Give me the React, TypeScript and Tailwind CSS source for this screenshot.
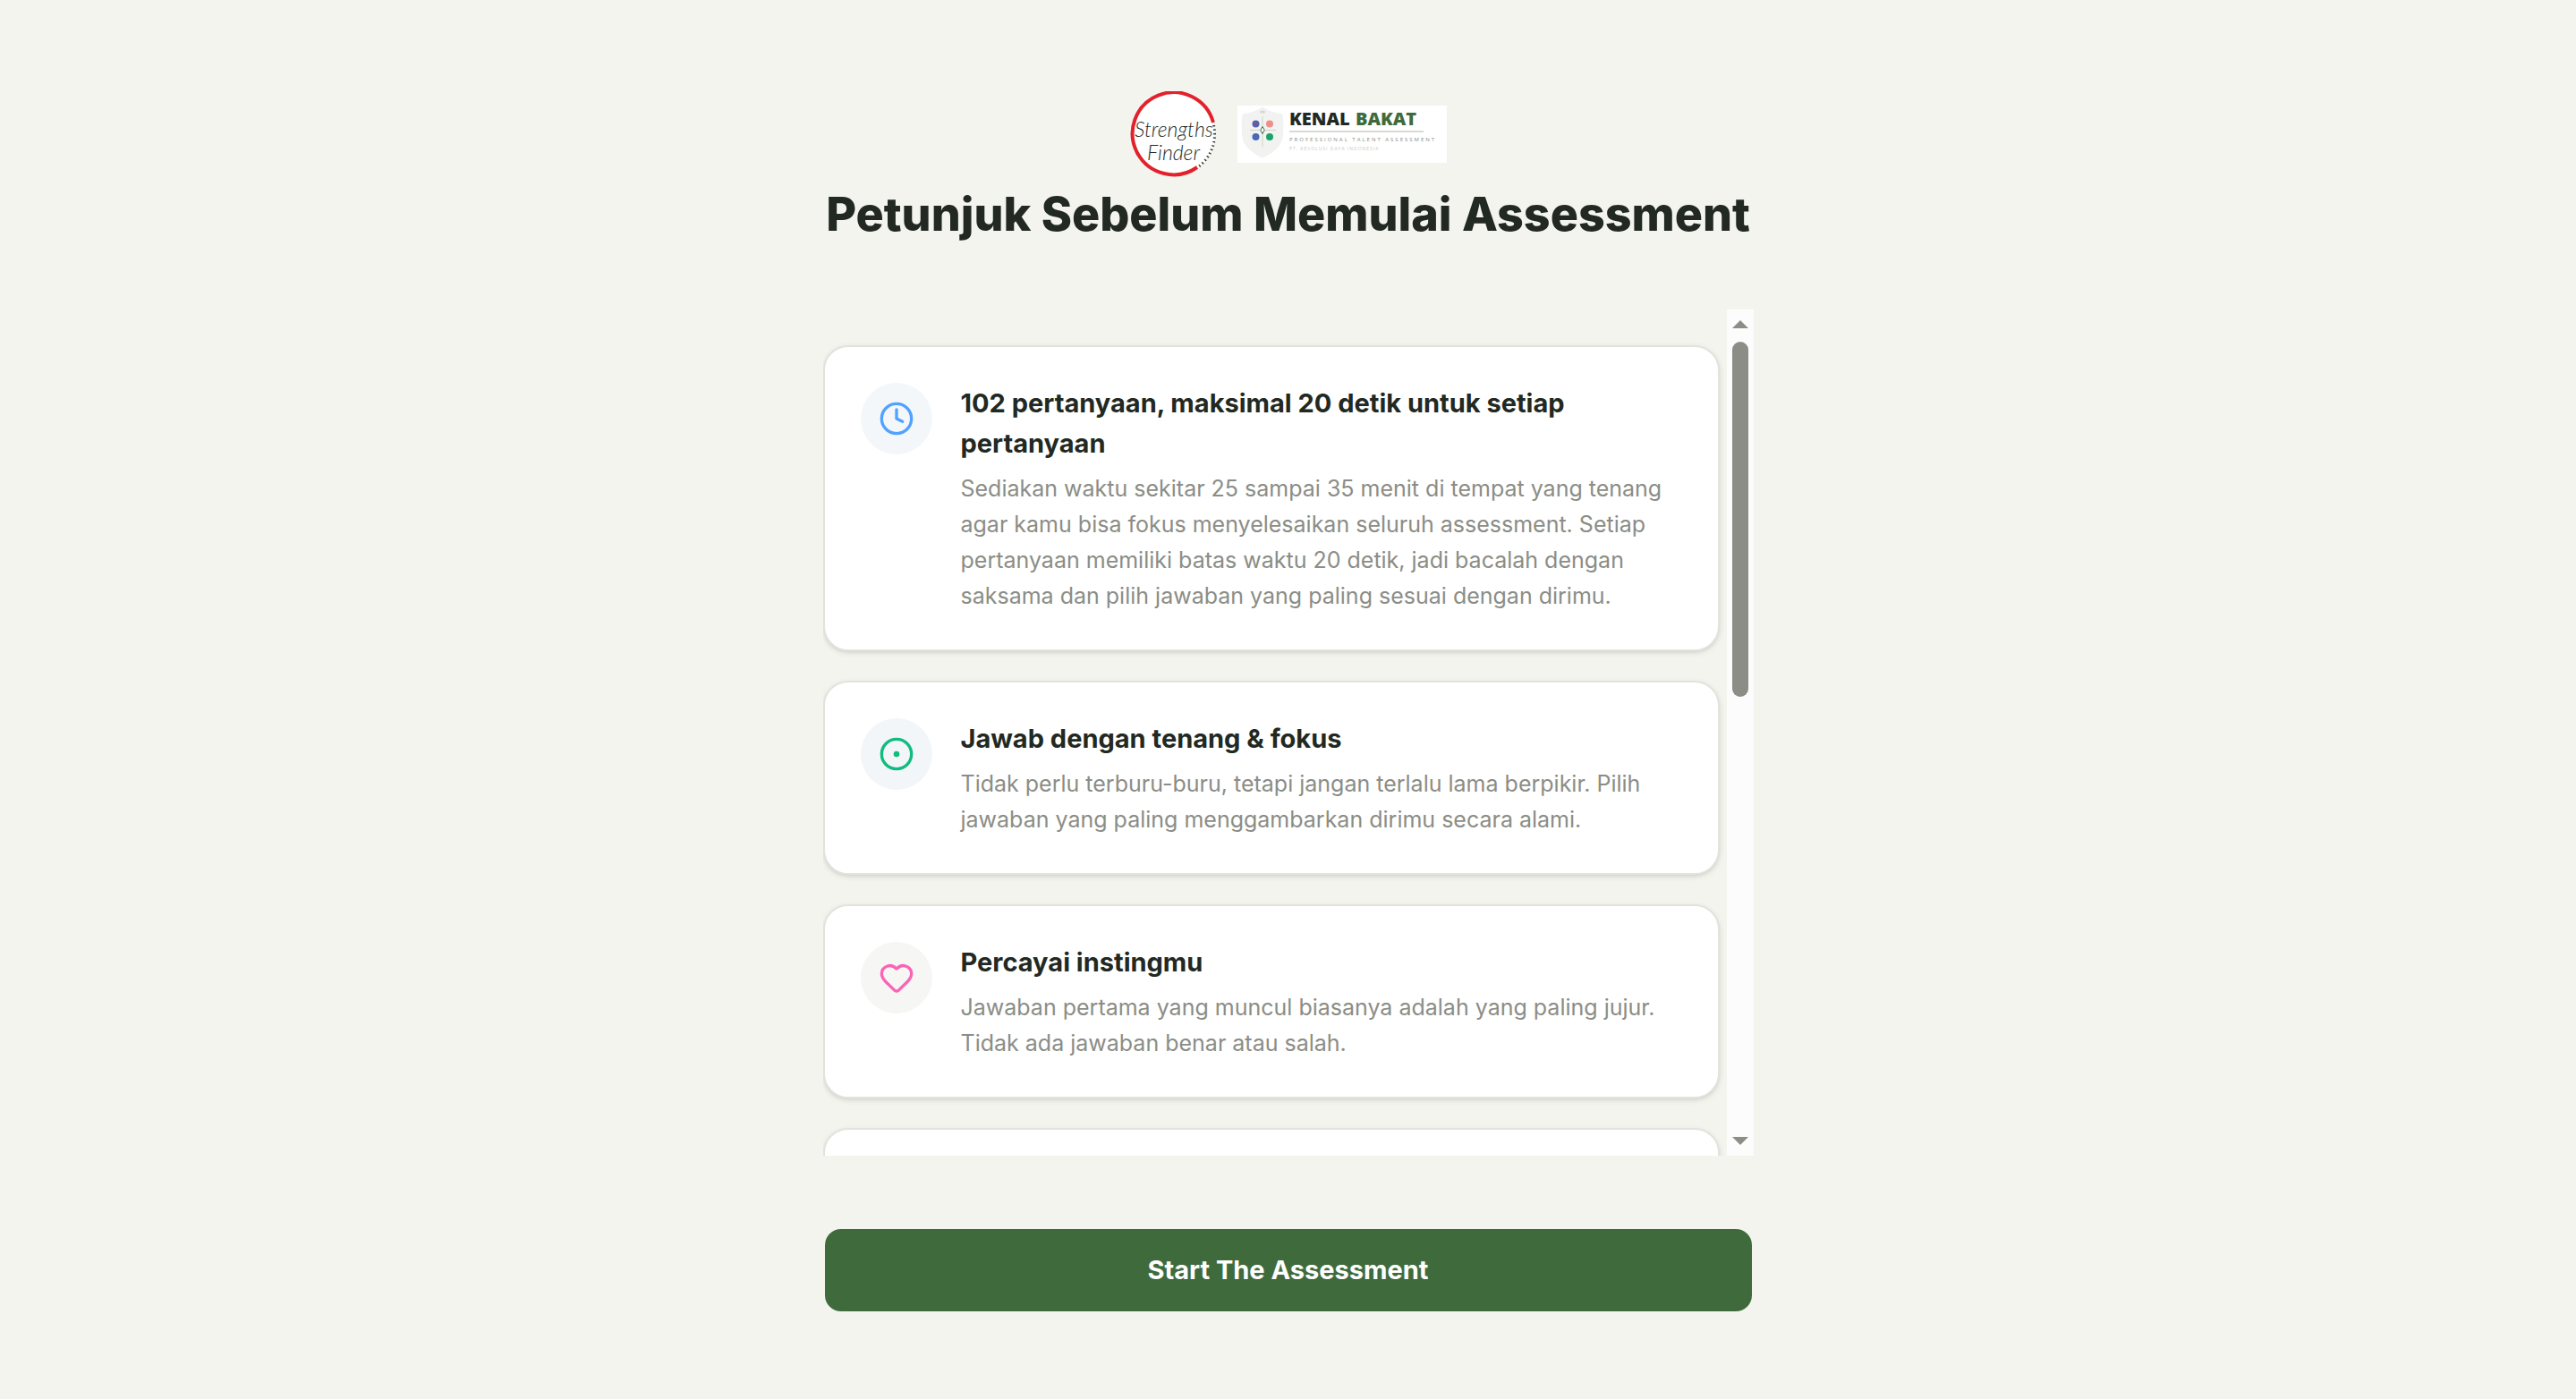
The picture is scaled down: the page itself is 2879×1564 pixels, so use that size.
import { CircleDot, Clock, Heart, type LucideIcon } from 'lucide-react';

type Instruction = {
  icon: LucideIcon;
  iconColor: string;
  iconBg: string;
  title: string;
  description: string;
};

const instructions: Instruction[] = [
  {
    icon: Clock,
    iconColor: 'text-[#51a2ff]',
    iconBg: 'bg-[#f3f7fa]',
    title: '102 pertanyaan, maksimal 20 detik untuk setiap pertanyaan',
    description:
      'Sediakan waktu sekitar 25 sampai 35 menit di tempat yang tenang agar kamu bisa fokus menyelesaikan seluruh assessment. Setiap pertanyaan memiliki batas waktu 20 detik, jadi bacalah dengan saksama dan pilih jawaban yang paling sesuai dengan dirimu.',
  },
  {
    icon: CircleDot,
    iconColor: 'text-[#10bc7e]',
    iconBg: 'bg-[#f2f6f9]',
    title: 'Jawab dengan tenang & fokus',
    description:
      'Tidak perlu terburu-buru, tetapi jangan terlalu lama berpikir. Pilih jawaban yang paling menggambarkan dirimu secara alami.',
  },
  {
    icon: Heart,
    iconColor: 'text-[#fb64b6]',
    iconBg: 'bg-[#f6f6f4]',
    title: 'Percayai instingmu',
    description:
      'Jawaban pertama yang muncul biasanya adalah yang paling jujur. Tidak ada jawaban benar atau salah.',
  },
];

const cardClass =
  'shrink-0 rounded-[28px] border-2 border-[#e3e3de] bg-white p-10 shadow-[0_2px_6px_rgba(0,0,0,0.1),0_2px_4px_-2px_rgba(0,0,0,0.1)]';

function StrengthsFinderLogo() {
  return (
    <svg viewBox="0 0 96 96" className="size-24" role="img" aria-label="Strengths Finder">
      <circle cx="48" cy="48" r="47" fill="#fff" />
      <path d="M93 35A46 46 0 1 0 75 85" fill="none" stroke="#e3212d" strokeWidth="4" />
      <path
        d="M93.5 38A46 46 0 0 1 77 84"
        fill="none"
        stroke="#3b413b"
        strokeWidth="3"
        strokeDasharray="1.5 3"
      />
      <g
        fill="#252b25"
        fontFamily="Lato, 'Liberation Sans', sans-serif"
        fontStyle="italic"
        fontWeight="300"
      >
        <text x="5" y="51" fontSize="23">
          Strengths
        </text>
        <text x="19" y="77" fontSize="23">
          Finder
        </text>
      </g>
    </svg>
  );
}

function KenalBakatLogo() {
  return (
    <svg viewBox="0 0 234 64" className="h-16 w-[234px] bg-white" role="img" aria-label="Kenal Bakat">
      <path
        d="M28 2C35 7 43 9 50 10C51 20 51 28 50 36C48 46 39 53 28 58C17 53 8 46 6 36C5 28 5 20 6 10C13 9 21 7 28 2Z"
        fill="#f2f3f1"
        stroke="#eef1f5"
      />
      <ellipse cx="28" cy="7" rx="3" ry="1.5" fill="#d5d7d2" />
      <path d="M28 12V46M14 27.5H43" stroke="#d0d3ce" strokeWidth="1" />
      <circle cx="20.5" cy="20.5" r="4" fill="#4a66b5" />
      <circle cx="20.5" cy="20.5" r="1.8" fill="#9b4a7c" />
      <circle cx="36" cy="20.5" r="4" fill="#f08f88" />
      <circle cx="20.5" cy="35" r="4" fill="#4a68b4" />
      <circle cx="36" cy="35" r="4" fill="#1ba36c" />
      <path d="M28 23.5L30.2 27.5L28 31.5L25.8 27.5Z" fill="#fff" stroke="#3f6b4a" />
      <g fontFamily="'Open Sans', 'Liberation Sans', sans-serif">
        <g fontSize="20" fontWeight="800">
          <text x="58" y="22" fill="#222922">
            KENAL
          </text>
          <text x="132" y="22" fill="#3f6b3c">
            BAKAT
          </text>
        </g>
        <text x="58" y="40" fontSize="6" fill="#8b8f88" className="tracking-[2px]">
          PROFESSIONAL TALENT ASSESSMENT
        </text>
        <text x="58" y="50" fontSize="5" fill="#c9cbc6" className="tracking-[1px]">
          PT. REVOLUSI DAYA INDONESIA
        </text>
      </g>
      <path d="M58 29H208" stroke="#d9dad5" strokeWidth="2" />
    </svg>
  );
}

function InstructionCard({ icon: Icon, iconColor, iconBg, title, description }: Instruction) {
  return (
    <li className={`flex gap-8 ${cardClass}`}>
      <div className={`flex size-20 shrink-0 items-center justify-center rounded-full ${iconBg}`}>
        <Icon className={`size-10 ${iconColor}`} />
      </div>
      <div className="min-w-0">
        <h2 className="mb-2 text-[29px] leading-[45px] font-bold text-[#222922]">{title}</h2>
        <p className="text-[25px] leading-10 text-[#8b8d86]">{description}</p>
      </div>
    </li>
  );
}

function Scrollbar() {
  return (
    <div
      className="flex w-[30px] shrink-0 flex-col items-center justify-between bg-[#fcfcfc] py-3 text-[#8b8d86]"
      aria-hidden="true"
    >
      <div className="flex flex-col gap-[15px]">
        <svg viewBox="0 0 18 9" className="h-[9px] w-[18px]">
          <path d="M0 9L9 0L18 9Z" fill="currentColor" />
        </svg>
        <div className="h-[397px] w-[18px] rounded-full bg-[#8b8d86]" />
      </div>
      <svg viewBox="0 0 18 9" className="h-[9px] w-[18px]">
        <path d="M0 0L9 9L18 0Z" fill="currentColor" />
      </svg>
    </div>
  );
}

export default function App() {
  return (
    <main className="flex h-screen flex-col items-center bg-[#f3f4ee] pt-[102px] pb-[98px] font-[Inter,'Liberation_Sans',sans-serif]">
      <div className="flex min-h-0 w-full max-w-[1040px] flex-1 flex-col">
        <header className="mb-16 flex flex-col items-center">
          <div className="flex items-center gap-6">
            <StrengthsFinderLogo />
            <KenalBakatLogo />
          </div>
          <h1 className="text-center text-[52px] leading-[84px] font-extrabold text-[#222922] sm:whitespace-nowrap">
            Petunjuk Sebelum Memulai Assessment
          </h1>
        </header>

        <div className="flex min-h-0 flex-1">
          <ul className="flex min-w-0 flex-1 flex-col gap-[33px] overflow-y-auto py-10 pr-2 [scrollbar-width:none]">
            {instructions.map((item) => (
              <InstructionCard key={item.title} {...item} />
            ))}
            <li className={`min-h-[217px] ${cardClass}`} />
          </ul>
          <Scrollbar />
        </div>

        <button
          type="button"
          className="mx-[2px] mt-[82px] h-[92px] rounded-[18px] bg-[#3f6b3c] text-[29px] font-bold text-white hover:bg-[#365d33]"
        >
          Start The Assessment
        </button>
      </div>
    </main>
  );
}
